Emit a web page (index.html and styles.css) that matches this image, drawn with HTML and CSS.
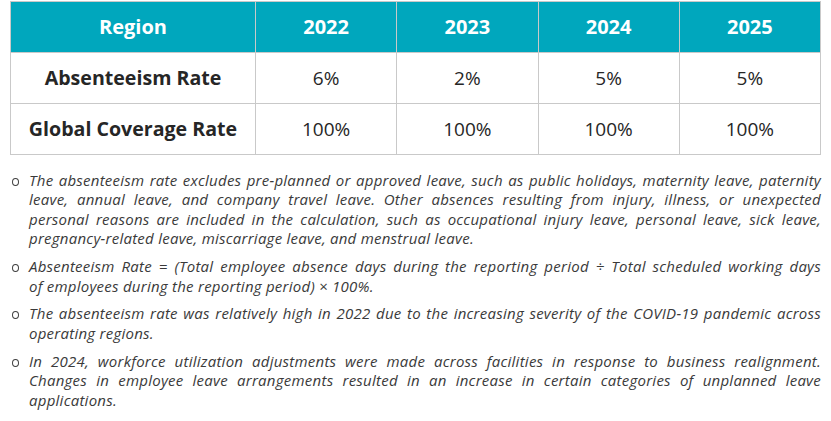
FILE: index.html
```html
<!DOCTYPE html>
<html lang="en">
<head>
<meta charset="utf-8">
<title>Absenteeism Rate</title>
<link rel="stylesheet" href="styles.css">
</head>
<body>
<div class="page">
  <table class="data">
    <thead>
      <tr>
        <th class="label">Region</th>
        <th>2022</th>
        <th>2023</th>
        <th>2024</th>
        <th>2025</th>
      </tr>
    </thead>
    <tbody>
      <tr>
        <td class="label">Absenteeism Rate</td>
        <td>6%</td>
        <td>2%</td>
        <td>5%</td>
        <td>5%</td>
      </tr>
      <tr>
        <td class="label">Global Coverage Rate</td>
        <td>100%</td>
        <td>100%</td>
        <td>100%</td>
        <td>100%</td>
      </tr>
    </tbody>
  </table>
  <ul class="notes">
    <li>
      <span class="ln">The absenteeism rate excludes pre-planned or approved leave, such as public holidays, maternity leave, paternity</span>
      <span class="ln">leave, annual leave, and company travel leave. Other absences resulting from injury, illness, or unexpected</span>
      <span class="ln">personal reasons are included in the calculation, such as occupational injury leave, personal leave, sick leave,</span>
      <span class="ln end">pregnancy-related leave, miscarriage leave, and menstrual leave.</span>
    </li>
    <li>
      <span class="ln">Absenteeism Rate = (Total employee absence days during the reporting period ÷ Total scheduled working days</span>
      <span class="ln end">of employees during the reporting period) × 100%.</span>
    </li>
    <li>
      <span class="ln">The absenteeism rate was relatively high in 2022 due to the increasing severity of the COVID-19 pandemic across</span>
      <span class="ln end">operating regions.</span>
    </li>
    <li>
      <span class="ln">In 2024, workforce utilization adjustments were made across facilities in response to business realignment.</span>
      <span class="ln">Changes in employee leave arrangements resulted in an increase in certain categories of unplanned leave</span>
      <span class="ln end">applications.</span>
    </li>
  </ul>
</div>
</body>
</html>
```

FILE: styles.css
```css
html, body {
  margin: 0;
  padding: 0;
  background: #ffffff;
}

.page {
  padding: 1px 10px 0 10px;
  font-family: "Open Sans", "Noto Sans", sans-serif;
  color: #262626;
}

.data {
  width: 811px;
  border-collapse: collapse;
  table-layout: fixed;
  border: 1px solid #c9c9c9;
}

.data th,
.data td {
  border: 1px solid #c9c9c9;
  text-align: center;
  vertical-align: middle;
  padding: 0;
  height: 50px;
  font-size: 19px;
  line-height: 24px;
}

.data th {
  background: #00a7bd;
  color: #ffffff;
  font-weight: 700;
  font-size: 20px;
}

.data th.label,
.data td.label {
  width: 244px;
}

.data td.label {
  font-weight: 700;
  font-size: 19.6px;
}

.data td {
  font-weight: 400;
}

.notes {
  list-style: none;
  margin: 16px 0 0 0;
  padding: 0;
  font-style: italic;
  font-size: 15px;
  letter-spacing: 0.25px;
  line-height: 19.4px;
  color: #3a3a3a;
}

.notes li {
  position: relative;
  padding-left: 19px;
  margin-bottom: 8.5px;
}

.notes .ln {
  display: block;
  text-align: justify;
  text-align-last: justify;
}

.notes .ln.end {
  text-align: left;
  text-align-last: left;
}

.notes li::before {
  content: "";
  position: absolute;
  left: 2px;
  top: 7px;
  width: 5px;
  height: 6px;
  border: 1px solid #404040;
  border-radius: 50%;
}
```
